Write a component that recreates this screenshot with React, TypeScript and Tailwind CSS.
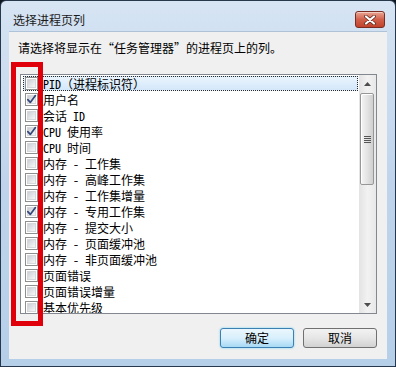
import { Fragment } from "react";

type Column = {
  label: string;
  checked: boolean;
};

const columns: Column[] = [
  { label: "PID（进程标识符）", checked: false },
  { label: "用户名", checked: true },
  { label: "会话 ID", checked: false },
  { label: "CPU 使用率", checked: true },
  { label: "CPU 时间", checked: false },
  { label: "内存 - 工作集", checked: false },
  { label: "内存 - 高峰工作集", checked: false },
  { label: "内存 - 工作集增量", checked: false },
  { label: "内存 - 专用工作集", checked: true },
  { label: "内存 - 提交大小", checked: false },
  { label: "内存 - 页面缓冲池", checked: false },
  { label: "内存 - 非页面缓冲池", checked: false },
  { label: "页面错误", checked: false },
  { label: "页面错误增量", checked: false },
  { label: "基本优先级", checked: false },
];

const CheckBox = ({ checked }: { checked: boolean }) => (
  <div className="flex h-[13px] w-[13px] shrink-0 items-center justify-center border border-[#8e8f8f] bg-white">
    <div className="relative h-[9px] w-[9px] border border-[#d5d7da] bg-gradient-to-br from-[#cbcfd5] to-[#f7f7f7]">
      {checked && (
        <svg
          className="absolute left-[-2px] top-[-2px]"
          width="11"
          height="11"
          viewBox="0 0 11 11"
        >
          <path
            d="M1.8 5.6 L4.3 8.4 L9.4 1.6"
            fill="none"
            stroke="#34487a"
            strokeWidth={1.7}
            strokeLinecap="round"
            strokeLinejoin="round"
          />
        </svg>
      )}
    </div>
  </div>
);

const ArrowButton = ({ down }: { down?: boolean }) => (
  <div className="flex h-[17px] w-[17px] items-center justify-center">
    <svg width="7" height="4" viewBox="0 0 7 4">
      <path
        d={down ? "M0 0 L7 0 L3.5 4 Z" : "M0 4 L7 4 L3.5 0 Z"}
        fill="#4d4d4d"
      />
    </svg>
  </div>
);

const App = () => {
  return (
    <div className="relative h-[367px] w-[396px] overflow-hidden bg-[#0e1620] font-['Noto_Sans_CJK_SC',sans-serif]">
      <div className="flex h-full flex-col rounded-t-[6px] border border-[#27384c] bg-gradient-to-b from-[#d6e4f3] via-[#bfd4ec] to-[#b6cfe9] px-[8px] pb-[7px]">
        {/* title bar */}
        <div className="flex h-[30px] items-center justify-between pt-[7px]">
          <span className="ml-[4px] text-[12px] leading-[16px] text-[#1b1b1b]">
            选择进程页列
          </span>
          <div className="mr-[2px] flex h-[17px] w-[30px] items-center justify-center rounded-[3px] border border-[#7a2c20] bg-gradient-to-b from-[#e9a594] via-[#d0604a] to-[#c1422b] shadow-[inset_0_1px_0_rgba(255,255,255,0.45)]">
            <svg width="12" height="10" viewBox="0 0 12 10">
              <path
                d="M2 1.5 L10 8.5 M10 1.5 L2 8.5"
                stroke="#5a2418"
                strokeWidth={3.6}
                strokeLinecap="round"
              />
              <path
                d="M2 1.5 L10 8.5 M10 1.5 L2 8.5"
                stroke="#ffffff"
                strokeWidth={2.2}
                strokeLinecap="round"
              />
            </svg>
          </div>
        </div>

        {/* client area */}
        <div className="flex flex-1 flex-col border-t border-[#aec2d8] bg-[#f0f0f0]">
          <p className="ml-[9px] mt-[8px] h-[16px] text-[12px] leading-[16px] text-black">
            请选择将显示在
            <span className="[font-feature-settings:'fwid']">“</span>
            任务管理器
            <span className="[font-feature-settings:'fwid']">”</span>
            的进程页上的列。
          </p>

          <div className="ml-[11px] mt-[18px] flex h-[240px] w-[357px] overflow-hidden border border-[#828790] bg-white">
            <div className="flex w-[338px] flex-col">
              {columns.map((col, i) => (
                <Fragment key={col.label}>
                  <div className="h-[16px] shrink-0 pl-[2px] pr-[1px] pt-[1px]">
                    <div
                      className={`flex h-[15px] items-center border ${
                        i === 0
                          ? "border-dotted border-[#2a2a2a] bg-gradient-to-b from-[#eaf4fd] to-[#d3e7fa]"
                          : "border-transparent"
                      }`}
                    >
                      <div className="ml-[1px]">
                        <CheckBox checked={col.checked} />
                      </div>
                      <span className="ml-[5px] whitespace-pre font-['Noto_Sans_Mono_CJK_SC','Liberation_Mono','Noto_Sans_CJK_SC',monospace] text-[12px] leading-[16px] text-black">
                        {col.label}
                      </span>
                    </div>
                  </div>
                </Fragment>
              ))}
            </div>

            {/* scrollbar */}
            <div className="flex w-[17px] flex-col bg-gradient-to-r from-[#e3e3e3] via-[#f2f2f2] to-[#e8e8e8]">
              <ArrowButton />
              <div className="ml-[1px] mt-[1px] flex h-[92px] w-[14px] items-center justify-center rounded-[2px] border border-[#979797] bg-gradient-to-r from-[#f5f5f5] via-[#e4e4e4] to-[#cfcfcf] shadow-[inset_1px_1px_0_#ffffff]">
                <div className="flex flex-col gap-[1px]">
                  <div className="h-[1px] w-[7px] bg-[#555]" />
                  <div className="h-[1px] w-[7px] bg-[#555]" />
                  <div className="h-[1px] w-[7px] bg-[#555]" />
                  <div className="h-[1px] w-[7px] bg-[#555]" />
                </div>
              </div>
              <div className="flex-1" />
              <ArrowButton down />
            </div>
          </div>

          <div className="mr-[10px] mt-[14px] flex justify-end gap-[9px]">
            <button className="flex h-[20px] w-[74px] items-center justify-center rounded-[3px] border border-[#3c7fb1] bg-gradient-to-b from-[#eaf6fd] via-[#d9f0fc] to-[#a7d9f5] text-[12px] leading-[16px] text-black shadow-[0_0_2px_#5ed0f7]">
              确定
            </button>
            <button className="flex h-[20px] w-[74px] items-center justify-center rounded-[3px] border border-[#707070] bg-gradient-to-b from-[#f2f2f2] via-[#e6e6e6] to-[#d2d2d2] text-[12px] leading-[16px] text-black">
              取消
            </button>
          </div>
        </div>
      </div>

      {/* red annotation box */}
      <div className="absolute left-[11px] top-[62px] h-[264px] w-[32px] border-[5px] border-[#e0000c]" />
    </div>
  );
};

export default App;
